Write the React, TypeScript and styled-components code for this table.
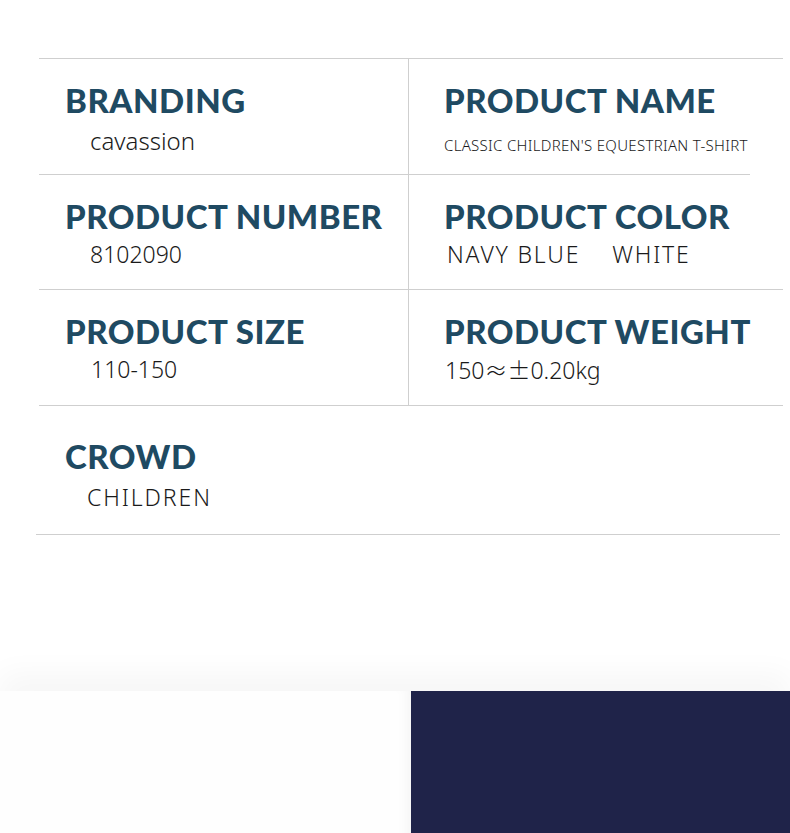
import React from "react";
import styled, { createGlobalStyle } from "styled-components";

const Global = createGlobalStyle`
  html, body { margin: 0; padding: 0; background: #ffffff; }
  body { font-family: "Noto Sans", "Liberation Sans", sans-serif; overflow: hidden; }
`;

const Page = styled.div`
  width: 790px;
  display: flex;
  flex-direction: column;
`;

const Sheet = styled.div`
  padding: 58px 0 0 39px;
  height: 691px;
  box-sizing: border-box;
`;

const Table = styled.div`
  width: 744px;
  display: grid;
  grid-template-columns: 369px 375px;
  border-top: 1px solid #cfcfcf;
`;

const Cell = styled.div<{ $right?: boolean; $h: number; $short?: boolean; $wide?: boolean; $pt?: number }>`
  position: relative;
  height: ${(p) => p.$h}px;
  box-sizing: border-box;
  padding: ${(p) => `${p.$pt ?? 21}px 0 0 ${p.$right ? 35 : 26}px`};
  border-left: ${(p) => (p.$right ? "1px solid #cfcfcf" : "none")};
  grid-column: ${(p) => (p.$wide ? "1 / span 2" : "auto")};
  &::after {
    content: "";
    position: absolute;
    left: ${(p) => (p.$wide ? "-3px" : "0")};
    bottom: 0;
    height: 1px;
    width: ${(p) => (p.$short ? "calc(100% - 33px)" : "100%")};
    background: #cfcfcf;
  }
`;

const Heading = styled.div`
  font-family: "Lato", "Liberation Sans", sans-serif;
  font-weight: 900;
  font-size: 33px;
  line-height: 40px;
  letter-spacing: 0.5px;
  color: #1f4a62;
  white-space: nowrap;
`;

const Value = styled.div<{ $indent: number; $size: number; $top: number; $ls?: number }>`
  font-family: "Noto Sans", "Liberation Sans", sans-serif;
  font-weight: 300;
  font-size: ${(p) => p.$size}px;
  line-height: ${(p) => p.$size + 6}px;
  margin-top: ${(p) => p.$top}px;
  padding-left: ${(p) => p.$indent}px;
  letter-spacing: ${(p) => p.$ls ?? 0}px;
  color: #1a1a1a;
  white-space: pre;
`;

const Wide = styled.span`
  font-family: "Noto Sans CJK SC", sans-serif;
  font-weight: 300;
`;

const Gap = styled.span`
  display: inline-block;
  width: 32px;
`;

const Bottom = styled.div`
  display: flex;
  height: 300px;
  box-shadow: 0 -18px 28px rgba(0, 0, 0, 0.035);
  position: relative;
`;

const WhitePanel = styled.div`
  width: 411px;
  background: #fefefe;
  box-shadow: inset -12px 0 14px -10px rgba(0, 0, 0, 0.05);
`;

const NavyPanel = styled.div`
  flex: 1;
  background: #1f2349;
`;

export default function App() {
  return (
    <Page>
      <Global />
      <Sheet>
        <Table>
          <Cell $h={116}>
            <Heading>BRANDING</Heading>
            <Value $indent={25} $size={24} $top={6}>cavassion</Value>
          </Cell>
          <Cell $h={116} $right $short>
            <Heading>PRODUCT NAME</Heading>
            <Value $indent={-2} $size={15} $top={15} $ls={0.3}>CLASSIC CHILDREN'S EQUESTRIAN T-SHIRT</Value>
          </Cell>
          <Cell $h={115}>
            <Heading>PRODUCT NUMBER</Heading>
            <Value $indent={25} $size={23} $top={4}>8102090</Value>
          </Cell>
          <Cell $h={115} $right>
            <Heading>PRODUCT COLOR</Heading>
            <Value $indent={3} $size={23} $top={4} $ls={1.8}>
              NAVY BLUE<Gap />WHITE
            </Value>
          </Cell>
          <Cell $h={116}>
            <Heading>PRODUCT SIZE</Heading>
            <Value $indent={26} $size={23} $top={4}>110-150</Value>
          </Cell>
          <Cell $h={116} $right>
            <Heading>PRODUCT WEIGHT</Heading>
            <Value $indent={1} $size={23} $top={4}>
              150<Wide>≈±</Wide>0.20kg
            </Value>
          </Cell>
          <Cell $h={129} $wide $pt={30}>
            <Heading>CROWD</Heading>
            <Value $indent={22} $size={23} $top={7} $ls={1.9}>CHILDREN</Value>
          </Cell>
        </Table>
      </Sheet>
      <Bottom>
        <WhitePanel />
        <NavyPanel />
      </Bottom>
    </Page>
  );
}
